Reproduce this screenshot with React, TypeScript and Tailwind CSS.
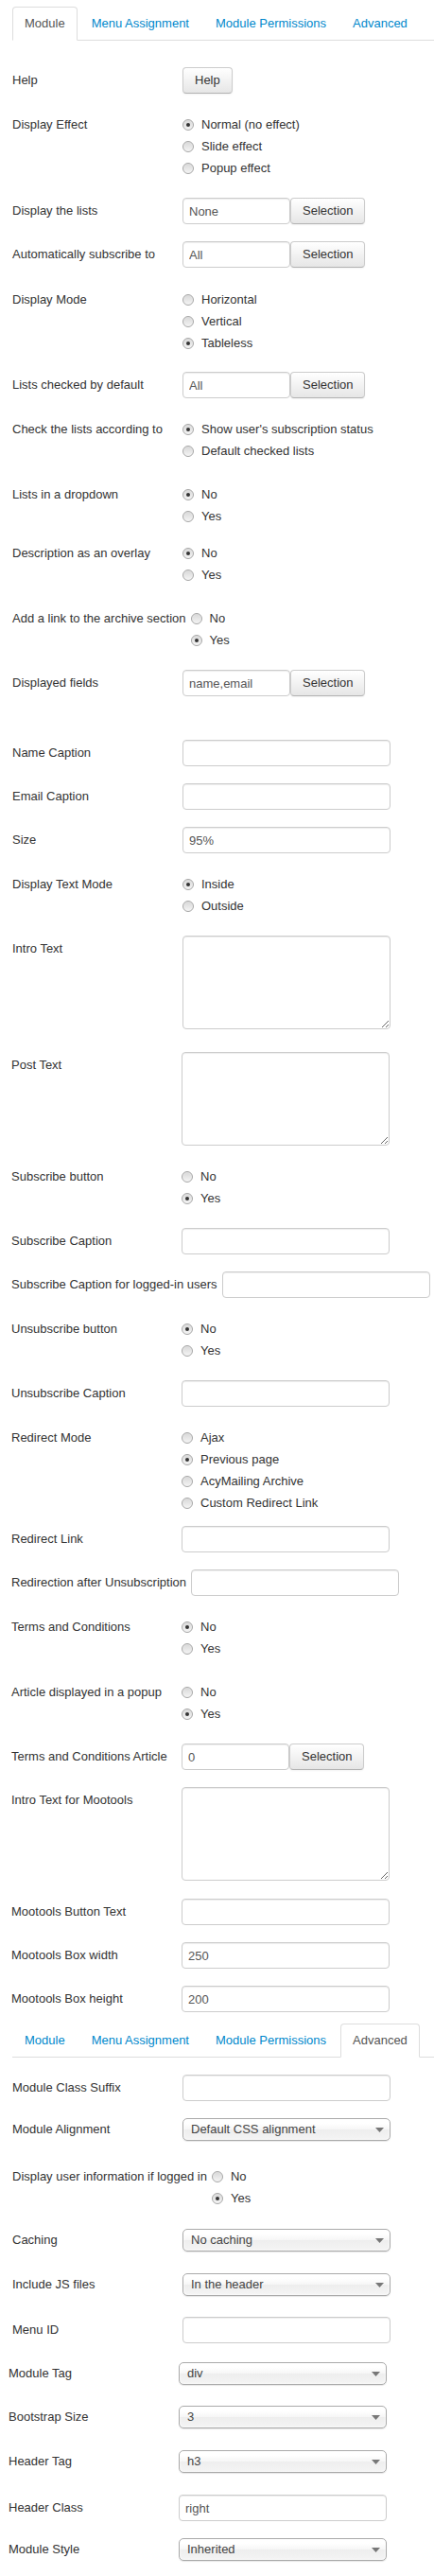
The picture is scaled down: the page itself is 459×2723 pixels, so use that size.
import type { ReactNode } from "react";

const TABS = ["Module", "Menu Assignment", "Module Permissions", "Advanced"];

function Tabs({ active, className = "" }: { active: string; className?: string }) {
	return (
		<div className={`pl-[13px] ${className}`}>
			<div className="flex border-b border-[#ddd]">
				{TABS.map((t) => (
					<div
						key={t}
						className={
							t === active
								? "-mb-px mr-[2px] rounded-t-[4px] border border-[#ddd] border-b-white bg-white px-[12px] py-[8px] leading-[18px] text-[#555]"
								: "-mb-px mr-[2px] rounded-t-[4px] border border-transparent px-[12px] py-[8px] leading-[18px] text-[#08c]"
						}
					>
						{t}
					</div>
				))}
			</div>
		</div>
	);
}

function Row({
	label,
	mt,
	lh = "leading-[28px]",
	pl = "pl-[13px]",
	children,
}: {
	label: string;
	mt: string;
	lh?: string;
	pl?: string;
	children: ReactNode;
}) {
	return (
		<div className={`flex items-start ${pl} ${mt}`}>
			<div className={`min-w-[180px] shrink-0 pr-[5px] ${lh}`}>{label}</div>
			{children}
		</div>
	);
}

function Btn({ children }: { children: ReactNode }) {
	return (
		<button
			type="button"
			className="h-[28px] rounded-[4px] border border-[#ccc] border-b-[#b3b3b3] bg-[linear-gradient(#fff,#e6e6e6)] px-[12px] leading-[18px] text-[#333] shadow-[inset_0_1px_0_rgba(255,255,255,0.2),0_1px_2px_rgba(0,0,0,0.05)]"
		>
			{children}
		</button>
	);
}

function TextInput({ value = "", narrow = false }: { value?: string; narrow?: boolean }) {
	return (
		<input
			type="text"
			readOnly
			value={value}
			className={`h-[28px] ${narrow ? "w-[114px]" : "w-[220px]"} rounded-[4px] border border-[#ccc] bg-white px-[6px] text-[13px] text-[#555] shadow-[inset_0_1px_1px_rgba(0,0,0,0.075)] outline-none`}
		/>
	);
}

function Picker({ value }: { value: string }) {
	return (
		<div className="flex">
			<TextInput value={value} narrow />
			<Btn>Selection</Btn>
		</div>
	);
}

function Area() {
	return (
		<textarea
			readOnly
			className="h-[99px] w-[220px] rounded-[4px] border border-[#ccc] bg-white px-[6px] py-[4px] text-[13px] text-[#555] shadow-[inset_0_1px_1px_rgba(0,0,0,0.075)] outline-none"
		/>
	);
}

function Radio({ checked }: { checked: boolean }) {
	return (
		<span className="flex h-[12px] w-[12px] shrink-0 items-center justify-center rounded-full border border-[#a6a6a6] bg-[linear-gradient(#d8d8d8,#f4f4f4)] shadow-[inset_0_0_1px_#fff]">
			{checked && <span className="h-[4px] w-[4px] rounded-full bg-[#333]" />}
		</span>
	);
}

function Radios({ options, checked }: { options: string[]; checked: string }) {
	return (
		<div className="flex flex-col">
			{options.map((o) => (
				<div key={o} className="flex h-[23px] items-center gap-[8px]">
					<Radio checked={o === checked} />
					<span>{o}</span>
				</div>
			))}
		</div>
	);
}

function Select({ value }: { value: string }) {
	return (
		<div className="flex h-[24px] w-[220px] items-center justify-between rounded-[5px] border border-[#aaa] bg-[linear-gradient(#fff_20%,#f6f6f6_50%,#eee_52%,#f4f4f4_100%)] pl-[8px] pr-[6px] text-[#444] shadow-[inset_0_0_3px_#fff,0_1px_1px_rgba(0,0,0,0.1)]">
			<span>{value}</span>
			<svg width="9" height="5" viewBox="0 0 9 5">
				<path d="M0 0h9L4.5 5z" fill="#777" />
			</svg>
		</div>
	);
}

const NY = ["No", "Yes"];
const R23 = "leading-[23px]";
const R24 = "leading-[24px]";

export default function App() {
	return (
		<div className="w-[459px] bg-white pb-[16px] font-['Liberation_Sans',Arial,sans-serif] text-[13px] text-[#333]">
			<Tabs active="Module" className="pt-[7px]" />

			<Row label="Help" mt="mt-[28px]">
				<Btn>Help</Btn>
			</Row>
			<Row label="Display Effect" mt="mt-[21px]" lh={R23}>
				<Radios options={["Normal (no effect)", "Slide effect", "Popup effect"]} checked="Normal (no effect)" />
			</Row>
			<Row label="Display the lists" mt="mt-[20px]">
				<Picker value="None" />
			</Row>
			<Row label="Automatically subscribe to" mt="mt-[18px]">
				<Picker value="All" />
			</Row>
			<Row label="Display Mode" mt="mt-[22px]" lh={R23}>
				<Radios options={["Horizontal", "Vertical", "Tableless"]} checked="Tableless" />
			</Row>
			<Row label="Lists checked by default" mt="mt-[19px]">
				<Picker value="All" />
			</Row>
			<Row label="Check the lists according to" mt="mt-[21px]" lh={R23}>
				<Radios options={["Show user's subscription status", "Default checked lists"]} checked="Show user's subscription status" />
			</Row>
			<Row label="Lists in a dropdown" mt="mt-[23px]" lh={R23}>
				<Radios options={NY} checked="No" />
			</Row>
			<Row label="Description as an overlay" mt="mt-[16px]" lh={R23}>
				<Radios options={NY} checked="No" />
			</Row>
			<Row label="Add a link to the archive section" mt="mt-[23px]" lh={R23}>
				<Radios options={NY} checked="Yes" />
			</Row>
			<Row label="Displayed fields" mt="mt-[20px]">
				<Picker value="name,email" />
			</Row>
			<Row label="Name Caption" mt="mt-[46px]">
				<TextInput />
			</Row>
			<Row label="Email Caption" mt="mt-[18px]">
				<TextInput />
			</Row>
			<Row label="Size" mt="mt-[18px]">
				<TextInput value="95%" />
			</Row>
			<Row label="Display Text Mode" mt="mt-[21px]" lh={R23}>
				<Radios options={["Inside", "Outside"]} checked="Inside" />
			</Row>
			<Row label="Intro Text" mt="mt-[20px]">
				<Area />
			</Row>
			<Row label="Post Text" mt="mt-[24px]" pl="pl-[12px]">
				<Area />
			</Row>
			<Row label="Subscribe button" mt="mt-[21px]" lh={R23} pl="pl-[12px]">
				<Radios options={NY} checked="Yes" />
			</Row>
			<Row label="Subscribe Caption" mt="mt-[20px]" pl="pl-[12px]">
				<TextInput />
			</Row>
			<Row label="Subscribe Caption for logged-in users" mt="mt-[18px]" pl="pl-[12px]">
				<TextInput />
			</Row>
			<Row label="Unsubscribe button" mt="mt-[21px]" lh={R23} pl="pl-[12px]">
				<Radios options={NY} checked="No" />
			</Row>
			<Row label="Unsubscribe Caption" mt="mt-[20px]" pl="pl-[12px]">
				<TextInput />
			</Row>
			<Row label="Redirect Mode" mt="mt-[21px]" lh={R23} pl="pl-[12px]">
				<Radios
					options={["Ajax", "Previous page", "AcyMailing Archive", "Custom Redirect Link"]}
					checked="Previous page"
				/>
			</Row>
			<Row label="Redirect Link" mt="mt-[13px]" pl="pl-[12px]">
				<TextInput />
			</Row>
			<Row label="Redirection after Unsubscription" mt="mt-[18px]" pl="pl-[12px]">
				<TextInput />
			</Row>
			<Row label="Terms and Conditions" mt="mt-[21px]" lh={R23} pl="pl-[12px]">
				<Radios options={NY} checked="No" />
			</Row>
			<Row label="Article displayed in a popup" mt="mt-[23px]" lh={R23} pl="pl-[12px]">
				<Radios options={NY} checked="Yes" />
			</Row>
			<Row label="Terms and Conditions Article" mt="mt-[20px]" pl="pl-[12px]">
				<Picker value="0" />
			</Row>
			<Row label="Intro Text for Mootools" mt="mt-[18px]" pl="pl-[12px]">
				<Area />
			</Row>
			<Row label="Mootools Button Text" mt="mt-[19px]" pl="pl-[12px]">
				<TextInput />
			</Row>
			<Row label="Mootools Box width" mt="mt-[18px]" pl="pl-[12px]">
				<TextInput value="250" />
			</Row>
			<Row label="Mootools Box height" mt="mt-[18px]" pl="pl-[12px]">
				<TextInput value="200" />
			</Row>

			<Tabs active="Advanced" className="mt-[12px]" />

			<Row label="Module Class Suffix" mt="mt-[18px]">
				<TextInput />
			</Row>
			<Row label="Module Alignment" mt="mt-[18px]" lh={R24}>
				<Select value="Default CSS alignment" />
			</Row>
			<Row label="Display user information if logged in" mt="mt-[26px]" lh={R23}>
				<Radios options={NY} checked="Yes" />
			</Row>
			<Row label="Caching" mt="mt-[21px]" lh={R24}>
				<Select value="No caching" />
			</Row>
			<Row label="Include JS files" mt="mt-[23px]" lh={R24}>
				<Select value="In the header" />
			</Row>
			<Row label="Menu ID" mt="mt-[22px]">
				<TextInput />
			</Row>
			<Row label="Module Tag" mt="mt-[20px]" lh={R24} pl="pl-[9px]">
				<Select value="div" />
			</Row>
			<Row label="Bootstrap Size" mt="mt-[22px]" lh={R24} pl="pl-[9px]">
				<Select value="3" />
			</Row>
			<Row label="Header Tag" mt="mt-[23px]" lh={R24} pl="pl-[9px]">
				<Select value="h3" />
			</Row>
			<Row label="Header Class" mt="mt-[23px]" pl="pl-[9px]">
				<TextInput value="right" />
			</Row>
			<Row label="Module Style" mt="mt-[18px]" lh={R24} pl="pl-[9px]">
				<Select value="Inherited" />
			</Row>
		</div>
	);
}
